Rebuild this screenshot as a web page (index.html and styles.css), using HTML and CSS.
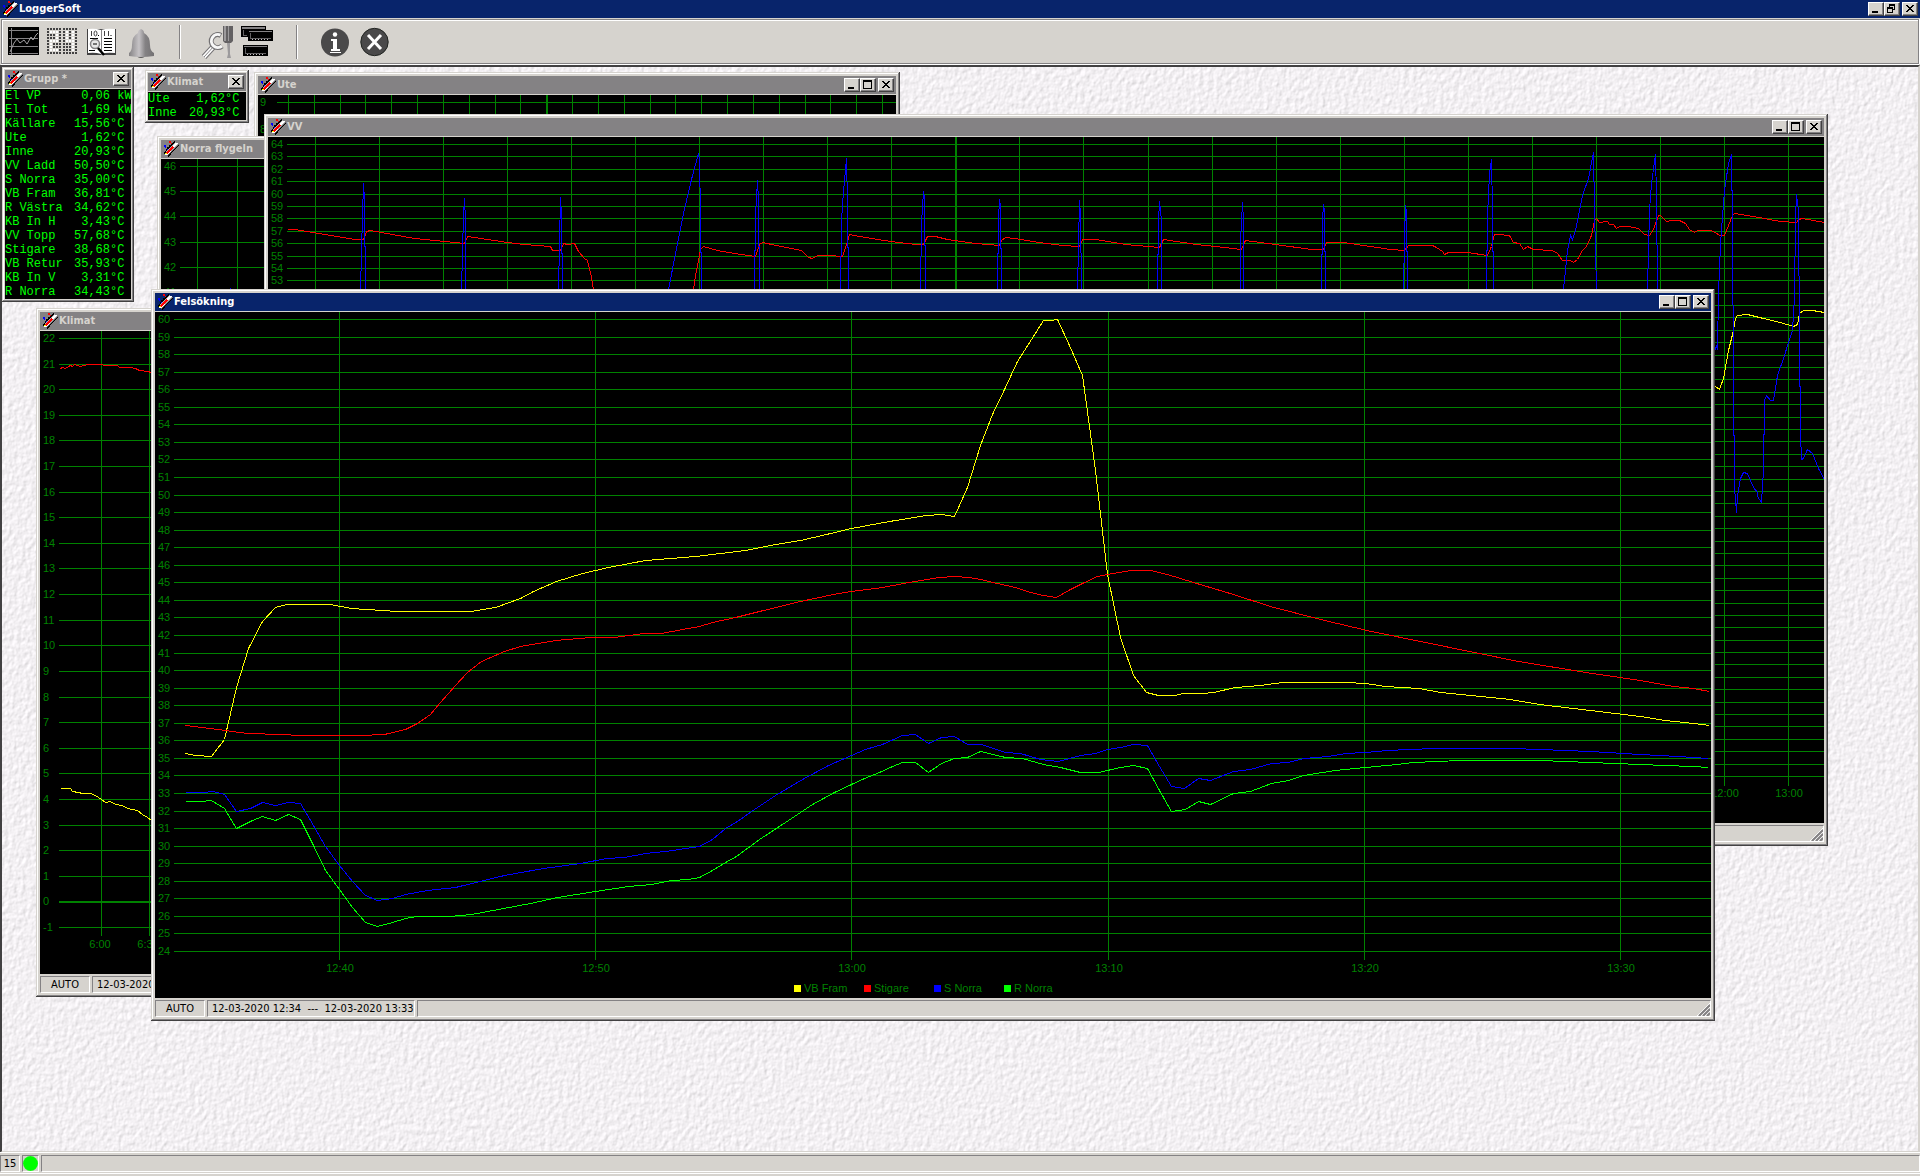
FILE: index.html
```html
<!DOCTYPE html>
<html lang="sv">
<head>
<meta charset="utf-8">
<title>LoggerSoft</title>
<link rel="stylesheet" href="styles.css">
</head>
<body>
<svg class="defs" width="0" height="0" aria-hidden="true">
  <defs>
    <symbol id="thermo" viewBox="0 0 16 16" shape-rendering="crispEdges">
      <path d="M4 6h2v2h-2zM6 4h2v2h-2zM8 2h2v2h-2zM3 8h2v1h-2zM7 6h1v2h-1zM9 4h1v2h-1zM5 9h1v1h-1zM11 1h2v1h-2z" fill="#000"/>
      <path d="M3 14L14 2" stroke="#000" stroke-width="6"/>
      <path d="M3 14L14 2" stroke="#b4b2b4" stroke-width="4"/>
      <path d="M3 14L14 2" stroke="#fff" stroke-width="2"/>
      <path d="M4 15L16 3" stroke="#6b696b" stroke-width="1"/>
      <path d="M3 13L10 6" stroke="#f00" stroke-width="2"/>
      <path d="M1 4h2v2h-2zM4 8h1v1h-1zM2 6h1v1h-1z" fill="#00f"/>
      <path d="M6 0h2v2h-2zM8 2h1v1h-1z" fill="#f00"/>
      <path d="M2 12h2v1h-2z" fill="#ff0"/>
    </symbol>
    <symbol id="min" viewBox="0 0 12 10"><path d="M2 7h6v2h-6z"/></symbol>
    <symbol id="max" viewBox="0 0 12 10"><path d="M1 0h9v9h-9zM2 2v6h7v-6z" fill-rule="evenodd"/></symbol>
    <symbol id="restore" viewBox="0 0 12 10"><path d="M3 0h6v6h-2v-1h1v-3h-4v1h-1zM1 3h6v6h-6zM2 5v3h4v-3z" fill-rule="evenodd"/></symbol>
    <symbol id="close" viewBox="0 0 12 10"><path d="M2 1h2v1h1v1h2v-1h1v-1h2v1h-1v1h-1v1h-1v1h1v1h1v1h1v1h-2v-1h-1v-1h-2v1h-1v1h-2v-1h1v-1h1v-1h1v-1h-1v-1h-1v-1h-1z"/></symbol>
    <symbol id="grip" viewBox="0 0 13 13">
      <path d="M0 13L13 0M4 13L13 4M8 13L13 8" stroke="#fff"/>
      <path d="M2 13L13 2M6 13L13 6M10 13L13 10" stroke="#848284" stroke-width="2"/>
    </symbol>
  </defs>
</svg>

<header class="titlebar active app-title">
  <svg class="app-icon"><use href="#thermo"/></svg>
  <h1 class="title">LoggerSoft</h1>
  <div class="controls">
    <button class="ctl" aria-label="Minimize"><svg><use href="#min"/></svg></button>
    <button class="ctl" aria-label="Restore"><svg><use href="#restore"/></svg></button>
    <button class="ctl close" aria-label="Close"><svg><use href="#close"/></svg></button>
  </div>
</header>

<nav class="toolbar" aria-label="Tools">
  <button class="tool" aria-label="Charts"><svg viewBox="4 21 39 42">
    <path d="M8 27h31v28h-31z"/><path d="M9 30.500H38M9 38.500H38M9 46.500H38M9 53.500H38M11.500 28V55" stroke="#848284"/>
    <path d="M10 52L14 43L17 39L20 43L24 40L27 44L31 37L33 40L36 35L38 33" fill="none" stroke="#a5a2a5" stroke-width="1"/></svg></button>
  <button class="tool" aria-label="Values"><svg viewBox="43 21 39 42" shape-rendering="crispEdges">
    <g id="dots" fill="#424142"></g></svg></button>
  <button class="tool" aria-label="History"><svg viewBox="82 21 39 42">
    <path d="M87 29h29v26h-29z" fill="#424142"/><path d="M88 29q7-1 13 1q6-2 14-1v24q-8-1-14 1q-6-2-13-1z" fill="#fff"/>
    <path d="M101.500 30V55" stroke="#848284"/>
    <path d="M91.500 31v5M104.500 31v5M108.500 31v5" stroke="#424142"/><ellipse cx="95.500" cy="33.500" rx="1.500" ry="2.500" fill="none" stroke="#424142"/>
    <path d="M98 35.500h1M110.500 35.500h1M90 38.500h8M104 38.500h8M104 41.500h8M104 44.500h8M104 47.500h8M104 50.500h8M89 50.500h6" stroke="#000" stroke-width="1"/>
    <circle cx="95" cy="44" r="4.500" fill="#e7e7e7" stroke="#848284" stroke-width="1.500"/><path d="M93 44h4" stroke="#000"/>
    <path d="M98 48L104 55" stroke="#000" stroke-width="2.500"/></svg></button>
  <button class="tool" aria-label="Alarms"><svg viewBox="121 21 39 42">
    <defs><linearGradient id="bell"><stop offset="0" stop-color="#848284"/><stop offset=".4" stop-color="#c6c3c6"/><stop offset=".65" stop-color="#848284"/><stop offset="1" stop-color="#737173"/></linearGradient></defs>
    <ellipse cx="141" cy="55" rx="4" ry="3" fill="#5a595a"/>
    <path d="M141 29q-3 1-3 4q-6 3-6 12q0 6-3 8v3q12 2 25 0v-3q-4-2-4-8q0-9-6-12q0-3-3-4z" fill="url(#bell)"/></svg></button>
  <span class="sep"></span>
  <button class="tool" aria-label="Settings"><svg viewBox="199 21 39 42">
    <path d="M204 57L215 45" stroke="#737173" stroke-width="6"/><path d="M204 57L215 45" stroke="#fff" stroke-width="4"/><path d="M204 57L215 45" stroke="#848284" stroke-width="1"/>
    <path d="M221 35.500A6.500 6.500 0 1 0 222 46" fill="none" stroke="#737173" stroke-width="5"/>
    <path d="M220.500 35A6.500 6.500 0 1 0 222 46" fill="none" stroke="#f7f7f7" stroke-width="3"/>
    <path d="M223 26h10v15l-2 2h-6l-2-2z" fill="#636163"/><path d="M224 26h2v15h-2zM228 26h1v15h-1z" fill="#9c9a9c"/>
    <path d="M227 43h3v11l1 4h-4l1-4z" fill="#9c9a9c"/></svg></button>
  <button class="tool" aria-label="Arrange windows"><svg viewBox="238 21 39 42" shape-rendering="crispEdges">
    <path d="M241 26h25v11h-25zM248 30h25v11h-25zM243 45h25v11h-25z"/><path d="M242 27h23v2h-23zM249 31h23v1h-23zM244 46h23v1h-23z" fill="#848284"/>
    <path d="M243 30v5h4M250 33v5h21M245 48v5h21" fill="none" stroke="#636163"/>
    <path d="M252 39h1m2 0h1m2 0h1m2 0h1m2 0h1m2 0h1M247 54h1m2 0h1m2 0h1m2 0h1m2 0h1m2 0h1" stroke="#c6c3c6"/></svg></button>
  <span class="sep"></span>
  <button class="tool" aria-label="Information"><svg viewBox="316 21 39 42">
    <circle cx="335" cy="42.500" r="14" fill="#4a494a"/><path d="M331 39h6v10h3v2h-9v-2h2v-8h-2zM330 52h11v1h-11z" fill="#fff"/><circle cx="335" cy="34.500" r="2.200" fill="#fff"/></svg></button>
  <button class="tool" aria-label="Exit"><svg viewBox="355 21 39 42">
    <circle cx="374.500" cy="42" r="13.700" fill="#4a494a" stroke="#212421"/><path d="M368 35L381 49M381 35L368 49" stroke="#fff" stroke-width="3"/></svg></button>
</nav>

<main class="desktop">
  <svg class="paper" aria-hidden="true">
    <filter id="emboss" x="0" y="0" width="100%" height="100%" color-interpolation-filters="sRGB">
      <feTurbulence type="fractalNoise" baseFrequency="0.220 0.180" numOctaves="3" seed="4"/>
      <feDiffuseLighting surfaceScale="0.500" diffuseConstant="1.080" lighting-color="#f8f5f8"><feDistantLight azimuth="225" elevation="65"/></feDiffuseLighting>
    </filter>
    <rect width="100%" height="100%" filter="url(#emboss)"/>
  </svg>

  <section class="window w-ute">
    <div class="titlebar"><svg class="app-icon"><use href="#thermo"/></svg><h2 class="title">Ute</h2>
      <div class="controls">
        <button class="ctl" aria-label="Minimize"><svg><use href="#min"/></svg></button>
        <button class="ctl" aria-label="Maximize"><svg><use href="#max"/></svg></button>
        <button class="ctl close" aria-label="Close"><svg><use href="#close"/></svg></button>
      </div></div>
    <svg class="chart" data-chart="ute"></svg>
  </section>

  <section class="window w-norra">
    <div class="titlebar"><svg class="app-icon"><use href="#thermo"/></svg><h2 class="title">Norra flygeln</h2></div>
    <svg class="chart" data-chart="norra"></svg>
  </section>

  <section class="window tool-window w-grupp">
    <div class="titlebar"><svg class="app-icon"><use href="#thermo"/></svg><h2 class="title">Grupp *</h2>
      <div class="controls"><button class="ctl close" aria-label="Close"><svg><use href="#close"/></svg></button></div></div>
    <div class="readout">
    <table class="values">
      <tr><th>El VP</th><td>0,06</td><td class="unit"> kW</td></tr>
      <tr><th>El Tot</th><td>1,69</td><td class="unit"> kW</td></tr>
      <tr><th>Källare</th><td>15,56</td><td class="unit">°C</td></tr>
      <tr><th>Ute</th><td>1,62</td><td class="unit">°C</td></tr>
      <tr><th>Inne</th><td>20,93</td><td class="unit">°C</td></tr>
      <tr><th>VV Ladd</th><td>50,50</td><td class="unit">°C</td></tr>
      <tr><th>S Norra</th><td>35,00</td><td class="unit">°C</td></tr>
      <tr><th>VB Fram</th><td>36,81</td><td class="unit">°C</td></tr>
      <tr><th>R Västra</th><td>34,62</td><td class="unit">°C</td></tr>
      <tr><th>KB In H</th><td>3,43</td><td class="unit">°C</td></tr>
      <tr><th>VV Topp</th><td>57,68</td><td class="unit">°C</td></tr>
      <tr><th>Stigare</th><td>38,68</td><td class="unit">°C</td></tr>
      <tr><th>VB Retur</th><td>35,93</td><td class="unit">°C</td></tr>
      <tr><th>KB In V</th><td>3,31</td><td class="unit">°C</td></tr>
      <tr><th>R Norra</th><td>34,43</td><td class="unit">°C</td></tr>
    </table></div>
  </section>

  <section class="window tool-window w-klimat-small">
    <div class="titlebar"><svg class="app-icon"><use href="#thermo"/></svg><h2 class="title">Klimat</h2>
      <div class="controls"><button class="ctl close" aria-label="Close"><svg><use href="#close"/></svg></button></div></div>
    <div class="readout">
    <table class="values narrow">
      <tr><th>Ute</th><td>1,62</td><td class="unit">°C</td></tr>
      <tr><th>Inne</th><td>20,93</td><td class="unit">°C</td></tr>
    </table></div>
  </section>

  <section class="window w-klimat">
    <div class="titlebar"><svg class="app-icon"><use href="#thermo"/></svg><h2 class="title">Klimat</h2></div>
    <svg class="chart" data-chart="klimat"></svg>
    <div class="statusbar"><span class="panel auto">AUTO</span><span class="panel">12-03-2020</span><span class="panel fill"></span></div>
  </section>

  <section class="window w-vv">
    <div class="titlebar"><svg class="app-icon"><use href="#thermo"/></svg><h2 class="title">VV</h2>
      <div class="controls">
        <button class="ctl" aria-label="Minimize"><svg><use href="#min"/></svg></button>
        <button class="ctl" aria-label="Maximize"><svg><use href="#max"/></svg></button>
        <button class="ctl close" aria-label="Close"><svg><use href="#close"/></svg></button>
      </div></div>
    <svg class="chart" data-chart="vv"></svg>
    <div class="statusbar"><span class="panel fill"></span><svg class="grip"><use href="#grip"/></svg></div>
  </section>

  <section class="window w-fel">
    <div class="titlebar active"><svg class="app-icon"><use href="#thermo"/></svg><h2 class="title">Felsökning</h2>
      <div class="controls">
        <button class="ctl" aria-label="Minimize"><svg><use href="#min"/></svg></button>
        <button class="ctl" aria-label="Maximize"><svg><use href="#max"/></svg></button>
        <button class="ctl close" aria-label="Close"><svg><use href="#close"/></svg></button>
      </div></div>
    <svg class="chart" data-chart="fel"></svg>
    <div class="statusbar"><span class="panel auto">AUTO</span><span class="panel period">12-03-2020 12:34&nbsp; ---&nbsp; 12-03-2020 13:33</span><span class="panel fill"></span><svg class="grip"><use href="#grip"/></svg></div>
  </section>
</main>

<footer class="statusbar app-status">
  <span class="panel count">15</span><span class="panel led"><i class="lamp"></i></span><span class="panel fill"></span>
</footer>
<script src="charts.js"></script>
</body>
</html>
```
FILE: charts.js
```js
// Charts are described in workspace coordinates: view = [x, y, width, height].
const YELLOW = '#ffff00', RED = '#ff0000', BLUE = '#0000ff', LIME = '#00ff00';

const charts = {
  fel: {
    view: [155, 312, 1556, 686],
    y: { from: 60, to: 24, top: 319, bottom: 951, left: 174, label: 158 },
    x: { first: 339, step: 256.2, labels: ['12:40', '12:50', '13:00', '13:10', '13:20', '13:30'], bottom: 960, base: 972 },
    legend: { x: 794, y: 985, step: 70, items: [['VB Fram', YELLOW], ['Stigare', RED], ['S Norra', BLUE], ['R Norra', LIME]] },
    series: [
      [YELLOW, '185,753 195,755 211,756 224,739 236,687 248,648 262,621 275,607 286,604 330,604 351,608 397,611 423,611 457,611 470,611 495,607 520,598 533,591 556,581 582,573 608,567 645,560 695,556 745,550 770,545 800,540 826,534 851,528 889,521 926,515 941,514 954,516 967,487 980,445 992,414 1005,387 1017,361 1031,339 1043,320 1050,320 1057,319 1069,345 1082,375 1095,470 1107,574 1120,637 1133,675 1146,692 1158,695 1174,695 1183,693 1203,693 1213,692 1235,687 1260,685 1282,682 1345,682 1365,683 1385,686 1419,688 1440,692 1480,696 1510,699 1539,704 1590,710 1640,716 1665,720 1693,723 1709,725'],
      [RED, '185,725 210,728 247,733 281,734 300,735 359,735 384,734 405,729 417,723 430,714 440,702 455,685 467,672 481,661 504,651 520,646 555,640 590,637 614,637 643,633 661,633 682,629 699,626 712,622 735,617 759,611 800,601 833,594 851,591 882,587 914,581 939,577 954,576 969,577 980,579 997,583 1015,587 1030,592 1043,595 1056,597 1070,589 1082,583 1097,576 1107,574 1130,570 1150,570 1167,574 1193,582 1233,594 1270,606 1320,619 1371,631 1469,651 1518,661 1592,673 1640,680 1673,686 1693,688 1709,691'],
      [BLUE, '185,792 203,792 213,791 224,794 236,811 250,808 262,802 275,805 288,802 300,803 313,825 325,846 339,865 352,881 365,895 377,900 392,898 405,894 427,890 455,887 504,875 543,868 580,863 606,858 624,857 645,853 665,851 699,846 712,839 725,828 737,821 751,811 775,795 802,779 828,765 851,755 865,749 882,744 902,735 915,734 928,743 941,737 954,736 967,744 981,744 990,747 1005,752 1020,753 1040,759 1058,761 1080,755 1095,753 1107,749 1120,747 1133,744 1147,745 1159,766 1171,786 1184,788 1198,778 1210,780 1233,771 1250,769 1271,763 1288,762 1303,758 1328,756 1345,753 1365,752 1387,750 1408,749 1435,748 1510,748 1540,749 1590,751 1640,754 1678,756 1692,757 1708,758'],
      [LIME, '185,801 200,801 211,800 224,808 236,828 252,820 262,816 275,820 288,814 300,819 313,845 325,870 339,889 352,907 365,922 377,926 392,922 405,918 417,916 449,916 471,914 498,909 530,903 557,897 595,891 628,886 651,884 671,880 688,879 699,877 712,870 725,862 736,856 759,839 788,820 812,804 834,792 851,784 864,778 879,772 892,766 902,762 915,762 928,772 941,763 954,758 967,757 980,751 1005,757 1022,758 1043,764 1060,767 1080,772 1098,772 1120,767 1133,765 1147,768 1159,790 1171,811 1185,809 1198,801 1210,804 1233,793 1250,791 1271,783 1288,780 1303,775 1335,770 1365,767 1397,764 1413,762 1460,760 1540,760 1590,762 1640,764 1665,765 1692,766 1708,767']
    ]
  },
  vv: {
    view: [268, 137, 1556, 686],
    y: { from: 64, to: 13, top: 144, bottom: 776, left: 287, label: 271 },
    x: { first: 315, step: 64.04, labels: Array.from({ length: 24 }, (_, i) => (i + 14) % 24 + ':00'), bottom: 786, base: 797, bold: 10 },
    series: [
      [RED, '287,229 294,229 313,232 330,235 355,239 363,239 366,231 370,230 414,238 444,241 464,243 467,236 507,242 524,244 550,246 552,250 560,250 563,243 567,244 574,243 578,251 584,258 587,260 590,272 593,289 620,380 675,380 693,289 695,275 698,260 700,249 703,246 717,250 734,253 755,256 759,244 762,242 776,245 801,250 808,257 812,258 817,255 829,255 842,256 847,241 849,234 854,235 877,239 898,242 916,244 923,244 927,236 935,236 947,239 975,243 999,245 1001,240 1005,237 1021,239 1038,242 1062,245 1079,246 1082,239 1095,239 1125,244 1159,247 1163,239 1196,244 1224,247 1241,249 1245,240 1275,244 1311,249 1323,249 1326,242 1343,242 1370,246 1390,249 1404,250 1408,245 1432,245 1436,247 1442,251 1444,254 1448,252 1467,252 1487,255 1491,246 1494,234 1497,234 1509,235 1513,242 1519,243 1523,249 1527,246 1533,249 1552,250 1557,253 1562,260 1570,260 1573,262 1577,259 1582,250 1586,246 1591,235 1594,220 1596,218 1599,222 1607,221 1609,224 1613,224 1616,228 1619,226 1628,226 1638,228 1644,234 1649,235 1653,229 1658,215 1660,215 1666,221 1672,220 1679,220 1685,223 1689,229 1694,232 1697,230 1710,230 1715,232 1719,235 1724,235 1728,225 1732,215 1734,213 1753,216 1780,221 1796,222 1798,219 1802,218 1824,222'],
      [YELLOW, '1700,370 1715,386 1719,389 1723,378 1728,350 1733,330 1735,318 1737,315 1747,314 1763,318 1780,322 1793,326 1797,324 1799,313 1803,310 1812,310 1824,312'],
      [BLUE, '340,420 360,289 362,215 363,183 364,200 365,289 370,420 455,420 461,289 463,215 464,198 465,220 465,289 470,420 550,420 558,289 560,197 561,215 562,289 565,420 640,420 668,289 677,243 683,213 690,183 692,175 698,153 699,160 700,213 701,289 705,420 745,420 754,289 755,215 757,180 758,200 759,289 765,420 835,420 840,289 841,223 842,203 846,158 847,203 848,289 850,420 915,420 920,289 921,223 923,191 924,198 925,289 930,420 990,420 997,289 998,218 999,199 1000,205 1001,289 1005,420 1070,420 1077,289 1079,200 1080,214 1081,289 1085,420 1150,420 1157,289 1158,220 1159,201 1161,220 1161,289 1165,420 1235,420 1240,289 1240,240 1242,202 1243,220 1243,289 1247,420 1317,420 1321,289 1322,220 1323,204 1324,211 1325,289 1330,420 1398,420 1403,289 1404,238 1405,205 1406,211 1407,289 1412,420 1480,420 1486,289 1487,215 1489,173 1491,159 1492,210 1493,289 1495,420 1550,420 1563,289 1567,250 1570,235 1572,239 1575,230 1582,195 1588,178 1593,152 1594,210 1596,289 1600,420 1640,420 1647,289 1649,210 1651,183 1655,154 1656,197 1657,289 1660,420 1700,380 1715,348 1717,344 1717,349 1718,293 1720,243 1724,190 1728,163 1731,154 1732,225 1733,382 1734,487 1736,512 1737,495 1740,478 1743,472 1747,473 1753,487 1757,492 1757,496 1761,502 1763,470 1764,400 1766,395 1770,400 1773,400 1777,375 1783,358 1788,342 1792,330 1794,297 1795,217 1796,194 1798,210 1799,337 1800,433 1801,459 1803,458 1807,449 1812,453 1818,468 1824,479']
    ]
  },
  klimat: {
    view: [40, 331, 692, 643],
    y: { from: 22, to: -1, top: 338, bottom: 927, left: 59, label: 43, bold: 0 },
    x: { first: 101, step: 48, labels: ['6:00', '6:30', '7:00', '7:30', '8:00', '8:30'], bottom: 936, base: 948, shift: -2 },
    series: [
      [RED, '60,368 62,367 65,368 68,366 70,365 72,366 74,364 77,365 80,366 83,365 88,364 101,364 104,365 117,365 119,367 129,367 135,368 139,370 147,371 151,372'],
      [YELLOW, '60,788 70,788 72,791 78,792 82,793 90,793 95,795 101,799 105,802 110,801 115,804 122,805 127,808 137,810 142,814 147,817 151,820']
    ]
  },
  norra: {
    view: [161, 159, 492, 393],
    y: { from: 46, to: 32, top: 166, bottom: 519, left: 180, label: 164 },
    x: { first: 197, step: 40, labels: Array(12).fill(''), bottom: 528, base: 540 },
    series: [[BLUE, '226,292 230,288 234,292']]
  },
  ute: {
    view: [258, 95, 638, 393],
    y: { from: 9, to: -3, top: 102, bottom: 426, left: 277, label: 260 },
    x: { first: 288, step: 25.83, labels: Array(24).fill(''), bottom: 436, base: 448, bold: 10 },
    series: []
  }
};

const NS = 'http://www.w3.org/2000/svg';
function add(parent, name, attrs, text) {
  const el = document.createElementNS(NS, name);
  for (const key in attrs) el.setAttribute(key, attrs[key]);
  if (text) el.textContent = text;
  parent.append(el);
  return el;
}

for (const svg of document.querySelectorAll('.chart')) {
  const { view, x, y, series, legend } = charts[svg.dataset.chart];
  svg.setAttribute('viewBox', view.join(' '));
  svg.setAttribute('preserveAspectRatio', 'xMinYMin slice');
  const right = view[0] + view[2];

  for (let v = y.from; v >= y.to; v--) {
    const at = Math.round(y.top + (y.from - v) * (y.bottom - y.top) / (y.from - y.to));
    add(svg, 'rect', { class: 'grid', x: y.left, y: at, width: right - y.left, height: v === y.bold ? 2 : 1 });
    add(svg, 'text', { x: y.label, y: at + 4 }, String(v));
  }
  x.labels.forEach((label, i) => {
    const at = Math.round(x.first + i * x.step);
    add(svg, 'rect', { class: 'grid', x: at, y: view[1], width: i === x.bold ? 2 : 1, height: x.bottom - view[1] });
    if (label) add(svg, 'text', { class: 'tick', x: at + 1 + (x.shift || 0), y: x.base }, label);
  });
  for (const [color, points] of series) {
    add(svg, 'polyline', { class: 'trace', points, stroke: color, transform: 'translate(.5 .5)' });
  }
  if (legend) legend.items.forEach(([name, color], i) => {
    const at = legend.x + i * legend.step;
    add(svg, 'rect', { x: at, y: legend.y, width: 7, height: 7, fill: color });
    add(svg, 'text', { x: at + 10, y: legend.y + 7 }, name);
  });
}

// Dot-matrix digits on the "Values" button.
['##########', '#...##.#.#', '###.##.#.#', '###.##.#.#', '#...##...#', '#.######.#', '#.######.#', '#...####.#', '##########']
  .forEach((row, r) => [...row].forEach((cell, c) => {
    add(document.getElementById('dots'), 'rect', { x: 47 + c * 3 + (c > 4 ? 1 : 0), y: 28 + r * 3, width: 2, height: 2, fill: cell === '#' ? '#424142' : '#fff' });
  }));
```
FILE: styles.css
```css
:root {
  --face: #d6d3ce;
  --shade: #848284;
  --dark: #424142;
  --active: #08246b;
  --grid: #008200;
}

* { box-sizing: border-box; }

body {
  margin: 0;
  height: 100vh;
  display: flex;
  flex-direction: column;
  overflow: hidden;
  background: var(--face);
  font: 11px/13px "DejaVu Sans Condensed", "Noto Sans", sans-serif;
  color: #000;
}

.defs { position: absolute; }

button {
  margin: 0;
  padding: 0;
  border: 0;
  background: none;
  font: inherit;
}

.titlebar {
  display: flex;
  align-items: center;
  flex: none;
  height: 18px;
  padding: 0 2px;
  background: var(--shade);
  color: var(--face);
}
.titlebar.active { background: var(--active); color: #fff; }
.app-icon { width: 16px; height: 16px; flex: none; }
.title {
  flex: 1;
  margin: 0 0 0 1px;
  font: bold 11px/16px "DejaVu Sans Condensed", "Noto Sans", sans-serif;
  white-space: nowrap;
}
.controls { display: flex; }
.ctl {
  width: 16px;
  height: 14px;
  padding: 1px 2px 3px 2px;
  background: var(--face);
  border: 1px solid;
  border-color: #fff var(--dark) var(--dark) #fff;
  box-shadow: inset -1px -1px var(--shade);
}
.ctl.close { margin-left: 2px; }
.ctl svg { display: block; width: 12px; height: 10px; margin-left: -1px; shape-rendering: crispEdges; }

.toolbar {
  display: flex;
  flex: none;
  height: 45px;
  margin: 1px;
  padding: 1px 0 0 2px;
  border: 1px solid var(--shade);
  box-shadow: inset 1px 1px #fff, 0 1px #fff, 1px 0 #fff;
}
.tool { width: 39px; height: 42px; }
.tool svg { display: block; width: 39px; height: 42px; }
.sep {
  width: 2px;
  height: 34px;
  margin: 4px 18px 0 19px;
  border-left: 1px solid var(--shade);
  border-right: 1px solid #fff;
}

.desktop {
  position: relative;
  flex: 1;
  overflow: hidden;
  border: 2px solid;
  border-color: var(--dark) var(--face) var(--face) var(--dark);
  background: #f3f1f3;
}
.paper { display: block; width: 100%; height: 100%; }

.window {
  position: absolute;
  display: flex;
  flex-direction: column;
  padding: 4px;
  background: var(--face);
  box-shadow: inset -1px -1px var(--dark), inset 1px 1px var(--face), inset -2px -2px var(--shade), inset 2px 2px #fff;
}
.window .titlebar { margin-bottom: 1px; }
.tool-window { padding: 3px; }

.w-grupp { left: 0; top: 0; width: 132px; }
.w-klimat-small { left: 143px; top: 3px; width: 104px; }
.w-ute { left: 252px; top: 5px; width: 646px; height: 420px; }
.w-norra { left: 155px; top: 69px; width: 500px; height: 420px; }
.w-klimat { left: 34px; top: 241px; width: 700px; height: 689px; }
.w-vv { left: 262px; top: 47px; width: 1564px; height: 732px; }
.w-fel { left: 149px; top: 222px; width: 1564px; height: 732px; }

.chart {
  display: block;
  flex: 1;
  min-height: 0;
  width: 100%;
  background: #000;
  font: 11px "Liberation Sans", sans-serif;
  fill: var(--grid);
}
.chart .grid { fill: var(--grid); shape-rendering: crispEdges; }
.chart .tick { text-anchor: middle; }
.chart .trace { fill: none; stroke-width: 1px; shape-rendering: crispEdges; }

.readout { background: #000; overflow: hidden; }
.values {
  table-layout: fixed;
  width: 133px;
  border-collapse: collapse;
  color: #00ff00;
  font: 12px/13px "Liberation Mono", monospace;
}
.values.narrow { width: 105px; }
.values th, .values td { height: 14px; padding: 1px 0 0; font-weight: normal; white-space: pre; text-align: left; }
.values td { width: 42px; text-align: right; }
.values .unit { width: 28px; text-align: left; }

.statusbar { position: relative; display: flex; flex: none; gap: 2px; padding-top: 2px; }
.panel {
  height: 17px;
  padding: 1px 4px;
  border: 1px solid;
  border-color: var(--shade) #fff #fff var(--shade);
  white-space: nowrap;
}
.auto { width: 50px; padding: 1px 0; text-align: center; }
.period { width: 208px; }
.fill { flex: 1; }
.grip { position: absolute; right: 1px; bottom: 1px; width: 13px; height: 13px; background: var(--face); }

.app-status { margin-bottom: 2px; padding-bottom: 1px; border-bottom: 1px solid #fff; box-shadow: 0 -1px #fff; }
.count { width: 20px; padding: 1px 0; text-align: center; }
.led { width: 17px; padding: 0; }
.lamp { display: block; width: 15px; height: 15px; border-radius: 50%; background: radial-gradient(#00ff00 60%, #6be86b); }
```
